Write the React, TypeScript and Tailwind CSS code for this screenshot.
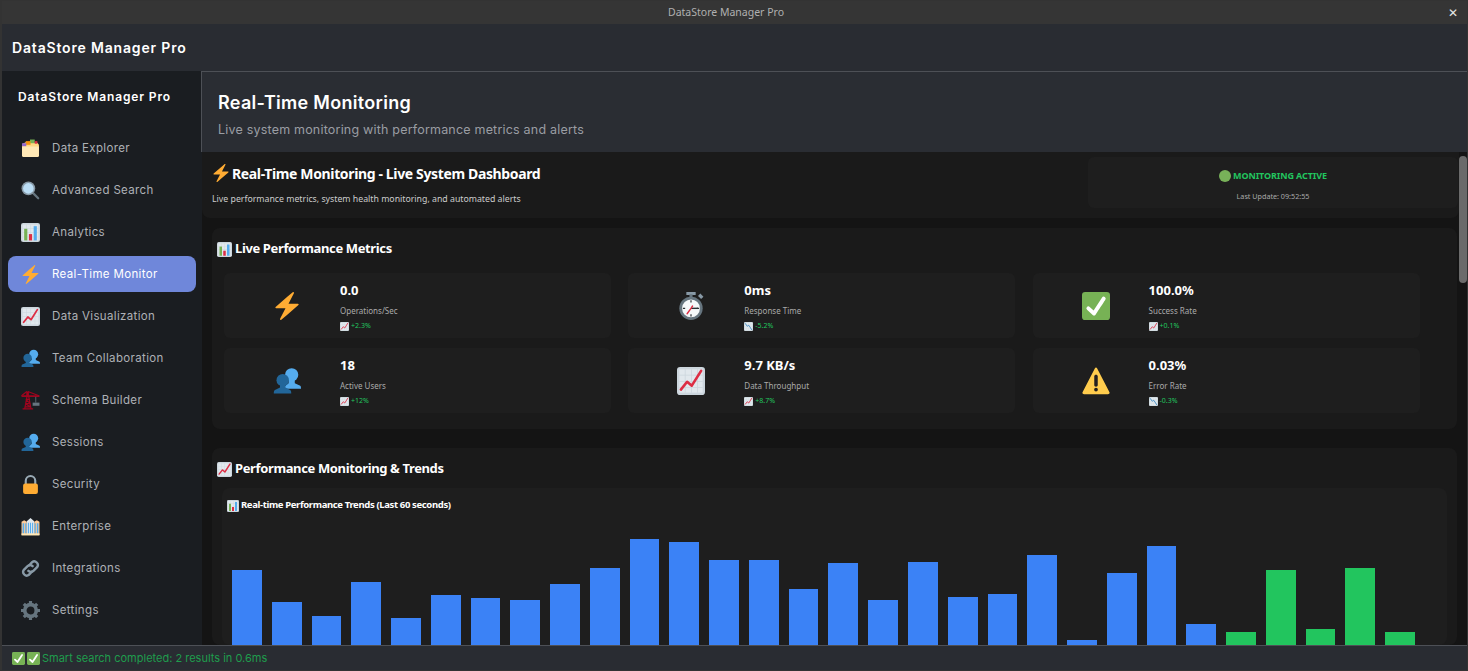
import React from "react";

type EmojiName =
  | "folder" | "search" | "bars" | "zap" | "up" | "down" | "users" | "crane" | "lock"
  | "office" | "link" | "gear" | "check" | "timer" | "warn" | "dot";

// hand drawn emoji set, all on a 36 x 36 box
const emojiParts: Record<EmojiName, React.ReactNode> = {
  folder: (
    <>
      <path fill="#FFD983" d="M3 9l6-3 22 1 3 4v20a3 3 0 0 1-3 3H5a3 3 0 0 1-3-3V12z" />
      <path fill="#77B255" d="M17 1h9v7h-9z" />
      <path fill="#DD2E44" d="M26 4h5v5h-5z" />
      <path fill="#F4900C" d="M9 4h9v7H9z" />
      <path fill="#9266CC" d="M2 8h8v6H2z" />
      <path fill="#FFE8B6" d="M2 14h32v17a3 3 0 0 1-3 3H5a3 3 0 0 1-3-3z" />
    </>
  ),
  search: (
    <>
      <path fill="#66757F" d="M21.5 24.5l3-3 9.6 9.6a2.1 2.1 0 0 1-3 3z" />
      <circle cx="14" cy="14" r="13" fill="#8899A6" />
      <circle cx="14" cy="14" r="10" fill="#BBDDF5" />
    </>
  ),
  bars: (
    <>
      <rect width="36" height="36" rx="4" fill="#CCD6DD" />
      <path fill="#E1E8ED" d="M3 3h30v30H3z" />
      <path fill="#CCD6DD" d="M3 10h30v1H3zM3 18h30v1H3zM3 26h30v1H3zM10 3h1v30h-1zM18 3h1v30h-1zM26 3h1v30h-1z" />
      <path fill="#77B255" d="M6 11h6v22H6z" />
      <path fill="#DD2E44" d="M15 21h6v12h-6z" />
      <path fill="#55ACEE" d="M24 6h6v27h-6z" />
    </>
  ),
  zap: (
    <path
      fill="#FFAC33"
      d="M32.938 15.651C32.792 15.26 32.418 15 32 15H19.925L26.89 1.458c.219-.426.106-.947-.271-1.243C26.437.071 26.218 0 26 0c-.233 0-.466.082-.653.243L18 6.588 3.347 19.243c-.316.273-.43.714-.284 1.105S3.582 21 4 21h12.075L9.11 34.542c-.219.426-.106.947.271 1.243.182.144.401.215.619.215.233 0 .466-.082.653-.243L18 29.412l14.653-12.655c.317-.273.43-.714.285-1.106z"
    />
  ),
  up: (
    <>
      <rect width="36" height="36" rx="4" fill="#CCD6DD" />
      <path fill="#E1E8ED" d="M3 3h30v30H3z" />
      <path fill="#CCD6DD" d="M3 10h30v1H3zM3 18h30v1H3zM3 26h30v1H3zM10 3h1v30h-1zM18 3h1v30h-1zM26 3h1v30h-1z" />
      <path fill="none" stroke="#DD2E44" strokeWidth="3.4" strokeLinecap="round" strokeLinejoin="round" d="M5 29l8-10 6 5 12-19" />
    </>
  ),
  down: (
    <>
      <rect width="36" height="36" rx="4" fill="#CCD6DD" />
      <path fill="#E1E8ED" d="M3 3h30v30H3z" />
      <path fill="#CCD6DD" d="M3 10h30v1H3zM3 18h30v1H3zM3 26h30v1H3zM10 3h1v30h-1zM18 3h1v30h-1zM26 3h1v30h-1z" />
      <path fill="none" stroke="#3B88C3" strokeWidth="3.4" strokeLinecap="round" strokeLinejoin="round" d="M5 6l8 11 6-4 12 18" />
    </>
  ),
  users: (
    <>
      <circle cx="24" cy="10" r="8.5" fill="#55ACEE" />
      <path fill="#55ACEE" d="M20 17h8v4l7 3c1 .6 1 2.500 1 4H14c0-2 1-3.400 2-4l4-3z" />
      <circle cx="12.500" cy="17" r="8" fill="#226699" />
      <path fill="#226699" d="M9 23h7v3.500l6 3c1.200.700 1.500 2 1.500 4.500H1c0-2.500.3-3.800 1.500-4.500l6.500-3z" />
    </>
  ),
  crane: (
    <>
      <path fill="none" stroke="#A0041E" strokeWidth="2.200" d="M12 7L7 34M14 7l5 27M3 34h20M9 16h8M8 24h10M7 30h12M9 16l9 8M8 24l10 6M11 1L1 9M13 1l21 8" />
      <path fill="#A0041E" d="M1 8h34v3.500H1zM10 1h5v8h-5z" />
      <path stroke="#66757F" strokeWidth="1.500" d="M28 11v11" />
      <path fill="#66757F" d="M22 22h13v6H22z" />
    </>
  ),
  lock: (
    <>
      <path fill="none" stroke="#99AAB5" strokeWidth="4" d="M9 17V11a9 9 0 0 1 18 0v6" />
      <path fill="#FFAC33" d="M4 20a4 4 0 0 1 4-4h20a4 4 0 0 1 4 4v12a4 4 0 0 1-4 4H8a4 4 0 0 1-4-4z" />
    </>
  ),
  office: (
    <>
      <path fill="#FFCC99" d="M1 9l5-3 5 3v25H1zM25 9l5-3 5 3v25H25z" />
      <path fill="#E1E8ED" d="M11 8l7-6 7 6v26H11z" />
      <path fill="#FFE8B6" d="M1 31h34v4H1z" />
      <path fill="#55ACEE" d="M3 12h3v19H3zM8 12h2v19H8zM13 11h2v20h-2zM17 11h2v20h-2zM21 11h2v20h-2zM26 12h2v19h-2zM30 12h3v19h-3z" />
    </>
  ),
  link: (
    <>
      <path fill="none" stroke="#8899A6" strokeWidth="4.500" strokeLinecap="round" d="M15.500 12l5.500-6a6.800 6.800 0 0 1 9.500 9.500l-7 7a6.800 6.800 0 0 1-9.500 0" />
      <path fill="none" stroke="#8899A6" strokeWidth="4.500" strokeLinecap="round" d="M20.500 24l-5.500 6a6.800 6.800 0 0 1-9.500-9.500l7-7a6.800 6.800 0 0 1 9.500 0" />
    </>
  ),
  gear: (
    <>
      <circle cx="18" cy="18" r="11" fill="none" stroke="#66757F" strokeWidth="7" />
      <path stroke="#66757F" strokeWidth="6" d="M18 0v7M18 29v7M0 18h7M29 18h7M5.300 5.300l5 5M25.700 25.700l5 5M5.300 30.700l5-5M25.700 10.300l5-5" />
    </>
  ),
  check: (
    <>
      <rect width="36" height="36" rx="4" fill="#77B255" />
      <path fill="#FFF" d="M29.280 6.362a2.502 2.502 0 0 0-3.458.736L14.936 23.877l-5.029-4.650a2.500 2.500 0 1 0-3.394 3.671l7.209 6.666c.48.445 1.090.665 1.696.665.673 0 1.534-.282 2.099-1.139.332-.506 12.500-19.270 12.500-19.270a2.500 2.500 0 0 0-.737-3.458z" />
    </>
  ),
  timer: (
    <>
      <path fill="#8899A6" d="M12 0h12v4H12zM27 5l3-3 4 4-3 3z" />
      <path fill="#66757F" d="M16 3h4v5h-4z" />
      <circle cx="18" cy="21" r="15" fill="#66757F" />
      <circle cx="18" cy="21" r="11.500" fill="#F5F8FA" />
      <path stroke="#292F33" strokeWidth="1.500" d="M18 10.500v3M18 28.500v3M7.500 21h3M25.500 21h3" />
      <path stroke="#292F33" strokeWidth="1.800" d="M18 21h9" />
      <path stroke="#DD2E44" strokeWidth="1.800" strokeLinecap="round" d="M18 21l-5 7M18 21l2-3" />
    </>
  ),
  warn: (
    <>
      <path fill="#FFCC4D" d="M2.653 35C.811 35-.001 33.662.847 32.027L16.456 1.972c.849-1.635 2.238-1.635 3.087 0l15.609 30.055c.85 1.635.037 2.973-1.805 2.973z" />
      <path fill="#231F20" d="M15.583 28.953a2.421 2.421 0 1 1 4.842 0 2.421 2.421 0 0 1-4.842 0zm.179-17.014c0-1.304.961-2.111 2.240-2.111 1.250 0 2.240.836 2.240 2.111v11.300c0 1.275-.990 2.111-2.240 2.111-1.279 0-2.240-.807-2.240-2.111z" />
    </>
  ),
  dot: <circle cx="18" cy="18" r="18" fill="#78B159" />,
};

function Emoji({ name, className }: { name: EmojiName; className: string }) {
  return (
    <svg viewBox="0 0 36 36" className={`shrink-0 ${className}`} aria-hidden="true">
      {emojiParts[name]}
    </svg>
  );
}

const navItems: { label: string; icon: EmojiName; active?: boolean }[] = [
  { label: "Data Explorer", icon: "folder" },
  { label: "Advanced Search", icon: "search" },
  { label: "Analytics", icon: "bars" },
  { label: "Real-Time Monitor", icon: "zap", active: true },
  { label: "Data Visualization", icon: "up" },
  { label: "Team Collaboration", icon: "users" },
  { label: "Schema Builder", icon: "crane" },
  { label: "Sessions", icon: "users" },
  { label: "Security", icon: "lock" },
  { label: "Enterprise", icon: "office" },
  { label: "Integrations", icon: "link" },
  { label: "Settings", icon: "gear" },
];

const metrics: { icon: EmojiName; value: string; label: string; trend: EmojiName; delta: string }[] = [
  { icon: "zap", value: "0.0", label: "Operations/Sec", trend: "up", delta: "+2.3%" },
  { icon: "timer", value: "0ms", label: "Response Time", trend: "down", delta: "-5.2%" },
  { icon: "check", value: "100.0%", label: "Success Rate", trend: "up", delta: "+0.1%" },
  { icon: "users", value: "18", label: "Active Users", trend: "up", delta: "+12%" },
  { icon: "up", value: "9.7 KB/s", label: "Data Throughput", trend: "up", delta: "+8.7%" },
  { icon: "warn", value: "0.03%", label: "Error Rate", trend: "down", delta: "-0.3%" },
];

// bar heights in px, the last ones are the green samples
const bars = [
  75, 43, 29, 63, 27, 50, 47, 45, 61, 77, 106, 103, 85, 85, 56, 82, 45, 83, 48, 51, 90, 5, 72, 99, 21,
  13, 75, 16, 77, 13,
];

function MetricCard({ icon, value, label, trend, delta }: (typeof metrics)[number]) {
  return (
    <div className="flex h-[65px] w-[387px] rounded-md bg-[#1e1e1e]">
      <div className="ml-[49px] flex w-[28px] shrink-0 items-center justify-center">
        <Emoji name={icon} className="size-[28px]" />
      </div>
      <div className="ml-[39px] flex flex-col pt-[8px]">
        <div className="h-[18px] text-[13px] leading-[18px] font-bold text-white">{value}</div>
        <div className="mt-[5px] h-[13px] text-[8px] leading-[13px] text-[#aaaaaa]">{label}</div>
        <div className="mt-[3px] flex h-[13px] items-center gap-[2px] text-[7px] text-[#22c55e]">
          <Emoji name={trend} className="size-[9px]" />
          <span>{delta}</span>
        </div>
      </div>
    </div>
  );
}

export default function App() {
  return (
    <div className="flex h-screen w-full flex-col overflow-hidden border-t border-r border-b border-l-2 border-[#333333] bg-[#292c32] font-['Noto_Sans',sans-serif]">
      {/* window title bar */}
      <div className="relative flex h-[23px] shrink-0 items-center justify-center bg-[#353535] pt-[1px] pr-[17px] text-[10.5px] text-[#b0b0b0]">
        DataStore Manager Pro
        <span className="absolute top-[4px] right-[9px] text-[12px] leading-[16px] text-[#e5e5e5]">✕</span>
      </div>

      {/* app header */}
      <div className="flex h-[47px] shrink-0 items-center pl-[10px] font-[Inter] text-[14px] font-semibold tracking-[0.83px] text-white">
        DataStore Manager Pro
      </div>

      <div className="flex min-h-0 flex-1">
        {/* sidebar */}
        <aside className="flex w-[199px] shrink-0 flex-col bg-[#1a1d21] font-[Inter]">
          <div className="flex h-[59px] items-center pb-[8px] pl-[16px] text-[12px] font-semibold tracking-[0.87px] text-white">
            DataStore Manager Pro
          </div>
          <nav className="flex flex-col gap-[6px]">
            {navItems.map((item) => (
              <div
                key={item.label}
                className={`mx-[6px] flex h-[36px] w-[188px] items-center rounded-lg pl-[13px] text-[11.5px] tracking-[0.35px] ${
                  item.active ? "bg-[#6f87da] text-white" : "text-[#aeb1b6]"
                }`}
              >
                <Emoji name={item.icon} className="size-[19px]" />
                <span className="ml-[12px] pt-[2px]">{item.label}</span>
              </div>
            ))}
          </nav>
        </aside>

        <main className="flex min-w-0 flex-1 flex-col bg-[#1a1d21]">
          {/* page header */}
          <div className="h-[81px] shrink-0 border-t border-l border-[#4d5056] bg-[#2a2d33] pt-[19px] pl-[16px] font-[Inter]">
            <h1 className="text-[18px] leading-[24px] font-semibold tracking-[0.3px] text-white">Real-Time Monitoring</h1>
            <p className="mt-[6px] text-[12.5px] leading-[18px] tracking-[0.2px] text-[#9a9da3]">
              Live system monitoring with performance metrics and alerts
            </p>
          </div>

          <div className="ml-[1px] flex min-h-0 flex-1 bg-[#141414]">
            <div className="min-w-0 flex-1 overflow-hidden">
              {/* dashboard banner */}
              <div className="flex h-[66px] items-start rounded-b-lg bg-[#1a1a1a] pr-[1px]">
                <div className="flex-1 pt-[10px] pl-[10px]">
                  <div className="flex h-[22px] items-center gap-[2px] text-[14px] font-bold tracking-[-0.36px] text-white">
                    <Emoji name="zap" className="size-[18px]" />
                    <span>Real-Time Monitoring - Live System Dashboard</span>
                  </div>
                  <p className="mt-[8px] text-[8.75px] leading-[14px] text-[#cccccc]">
                    Live performance metrics, system health monitoring, and automated alerts
                  </p>
                </div>
                <div className="mt-[5px] flex h-[51px] w-[370px] flex-col items-center rounded-md bg-[#1e1e1e] pt-[12px]">
                  <div className="flex h-[14px] items-center gap-[2px] text-[9px] font-bold tracking-[-0.1px] text-[#22c55e]">
                    <Emoji name="dot" className="size-[12px]" />
                    <span>MONITORING ACTIVE</span>
                  </div>
                  <div className="mt-[7px] text-[7.2px] leading-[12px] text-[#aaaaaa]">Last Update: 09:52:55</div>
                </div>
              </div>

              {/* live metrics */}
              <section className="mt-[10px] ml-[10px] h-[201px] w-[1245px] rounded-lg bg-[#1a1a1a] pt-[12px] pl-[5px]">
                <h2 className="flex h-[18px] items-center gap-[3px] text-[13px] font-bold tracking-[-0.37px] text-white">
                  <Emoji name="bars" className="size-[15px]" />
                  Live Performance Metrics
                </h2>
                <div className="mt-[15px] ml-[7px] grid w-[1196px] grid-cols-[387px_387px_387px] gap-x-[17.3px] gap-y-[10px]">
                  {metrics.map((m) => (
                    <MetricCard key={m.label} {...m} />
                  ))}
                </div>
              </section>

              {/* trends */}
              <section className="mt-[19px] ml-[10px] w-[1245px] rounded-lg bg-[#1a1a1a] pt-[12px] pl-[5px]">
                <h2 className="flex h-[18px] items-center gap-[3px] text-[13px] font-bold tracking-[-0.37px] text-white">
                  <Emoji name="up" className="size-[15px]" />
                  Performance Monitoring &amp; Trends
                </h2>
                <div className="mt-[10px] ml-[5px] w-[1225px] rounded-lg bg-[#1e1e1e] pt-[10px] pl-[5px]">
                  <div className="flex h-[15px] items-center gap-[2px] text-[9.500px] font-bold tracking-[-0.36px] text-white">
                    <Emoji name="bars" className="size-[12px]" />
                    Real-time Performance Trends (Last 60 seconds)
                  </div>
                  <div className="mt-[17px] flex h-[115px] w-[1193px] items-end">
                    {bars.map((h, i) => (
                      <div
                        key={i}
                        className={`mx-[5px] flex-1 ${i >= 25 ? "bg-[#22c55e]" : "bg-[#3b82f6]"}`}
                        style={{ height: h }}
                      />
                    ))}
                  </div>
                </div>
              </section>
            </div>

            {/* scrollbar */}
            <div className="w-[8px] shrink-0 bg-[#141414] pt-[4px]">
              <div className="h-[127px] w-[8px] rounded-full bg-[#6b6b6b]" />
            </div>
          </div>
        </main>
      </div>

      {/* status bar */}
      <div className="flex h-[25px] shrink-0 items-center gap-[2px] border-t border-[#4d5056] bg-[#292c32] pl-[10px] font-[Inter] text-[11px] text-[#1f9d4d]">
        <Emoji name="check" className="size-[13px]" />
        <Emoji name="check" className="size-[13px]" />
        <span>Smart search completed: 2 results in 0.6ms</span>
      </div>
    </div>
  );
}
